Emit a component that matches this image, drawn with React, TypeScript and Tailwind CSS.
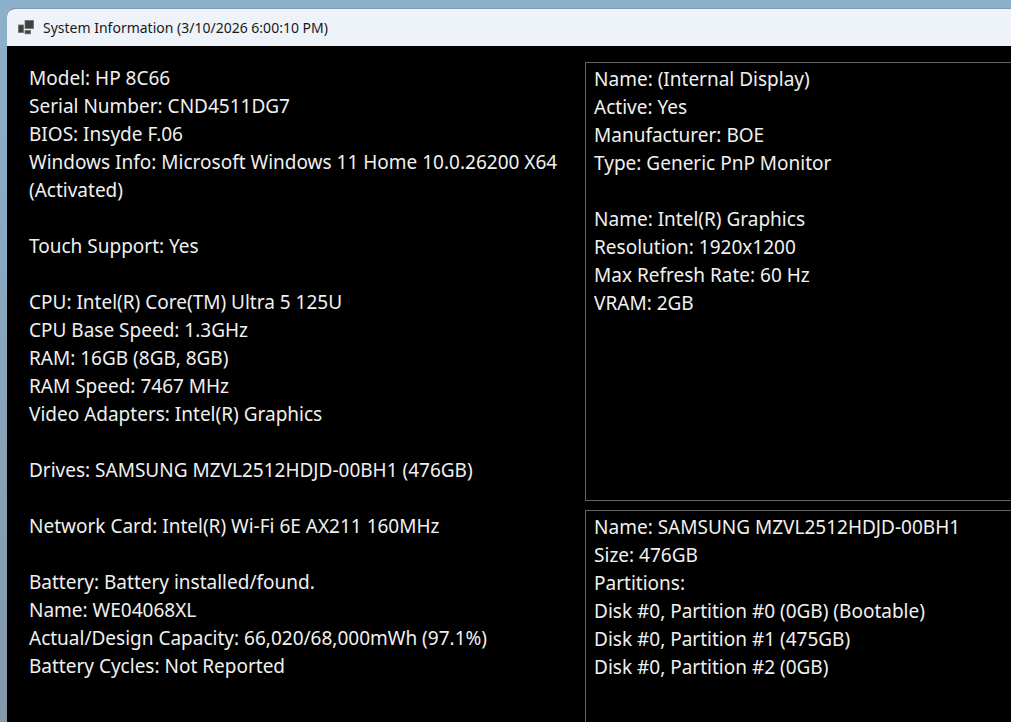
import React from "react";

const SYSTEM_GROUPS = [
  [
    "Model: HP 8C66",
    "Serial Number: CND4511DG7",
    "BIOS: Insyde F.06",
    "Windows Info: Microsoft Windows 11 Home 10.0.26200 X64 (Activated)",
  ],
  ["Touch Support: Yes"],
  [
    "CPU: Intel(R) Core(TM) Ultra 5 125U",
    "CPU Base Speed: 1.3GHz",
    "RAM: 16GB (8GB, 8GB)",
    "RAM Speed: 7467 MHz",
    "Video Adapters: Intel(R) Graphics",
  ],
  ["Drives: SAMSUNG MZVL2512HDJD-00BH1 (476GB)"],
  ["Network Card: Intel(R) Wi-Fi 6E AX211 160MHz"],
  [
    "Battery: Battery installed/found.",
    "Name: WE04068XL",
    "Actual/Design Capacity: 66,020/68,000mWh (97.1%)",
    "Battery Cycles: Not Reported",
  ],
];

const DISPLAY_GROUPS = [
  [
    "Name: (Internal Display)",
    "Active: Yes",
    "Manufacturer: BOE",
    "Type: Generic PnP Monitor",
  ],
  [
    "Name: Intel(R) Graphics",
    "Resolution: 1920x1200",
    "Max Refresh Rate: 60 Hz",
    "VRAM: 2GB",
  ],
];

const DRIVE_GROUPS = [
  [
    "Name: SAMSUNG MZVL2512HDJD-00BH1",
    "Size: 476GB",
    "Partitions:",
    "Disk #0, Partition #0 (0GB) (Bootable)",
    "Disk #0, Partition #1 (475GB)",
    "Disk #0, Partition #2 (0GB)",
  ],
];

const AppIcon: React.FC = () => (
  <svg viewBox="0 0 16 16" className="w-4 h-4" aria-hidden="true">
    <path fill="#8a8b8d" d="M0 4.5h6V13H0zM6.5 0H16v9H6.5zM6.5 10H13v4.2H6.5z" />
    <path fill="#404040" d="M.7 5.2h4.6v7H.7zM7.2.7h8.1v7.6H7.2zM7.2 10.7h5.1v2.8H7.2z" />
  </svg>
);

const InfoGroups: React.FC<{ groups: string[][] }> = ({ groups }) => (
  <div className="flex flex-col gap-7">
    {groups.map((lines) => (
      <div key={lines[0]}>
        {lines.map((line) => (
          <p key={line}>{line}</p>
        ))}
      </div>
    ))}
  </div>
);

const App: React.FC = () => {
  return (
    <div className="min-h-screen flex flex-col pl-[7px] pt-2 bg-linear-to-b from-[#8db1cb] to-[#8398ab] font-['Noto_Sans',sans-serif]">
      <main className="flex-1 flex flex-col rounded-tl-lg overflow-hidden border-t border-[#8199aa] bg-black">
        <header className="flex items-center gap-[9px] h-[37px] px-[11px] bg-[#eef3f9]">
          <AppIcon />
          <h1 className="text-sm text-[#191919]">
            System Information (3/10/2026 6:00:10 PM)
          </h1>
        </header>
        <div className="flex-1 grid grid-cols-[minmax(0,19fr)_minmax(0,14fr)] text-[19px] leading-7 text-[#f0f0f0]">
          <section className="pl-[22px] pr-4 pt-[18px] pb-4">
            <InfoGroups groups={SYSTEM_GROUPS} />
          </section>
          <div className="flex flex-col gap-[9px] pt-4">
            <section className="min-h-[439px] px-2 py-0.5 border border-r-0 border-[#646464]">
              <InfoGroups groups={DISPLAY_GROUPS} />
            </section>
            <section className="flex-1 px-2 py-0.5 border border-r-0 border-b-0 border-[#646464]">
              <InfoGroups groups={DRIVE_GROUPS} />
            </section>
          </div>
        </div>
      </main>
    </div>
  );
};

export default App;
